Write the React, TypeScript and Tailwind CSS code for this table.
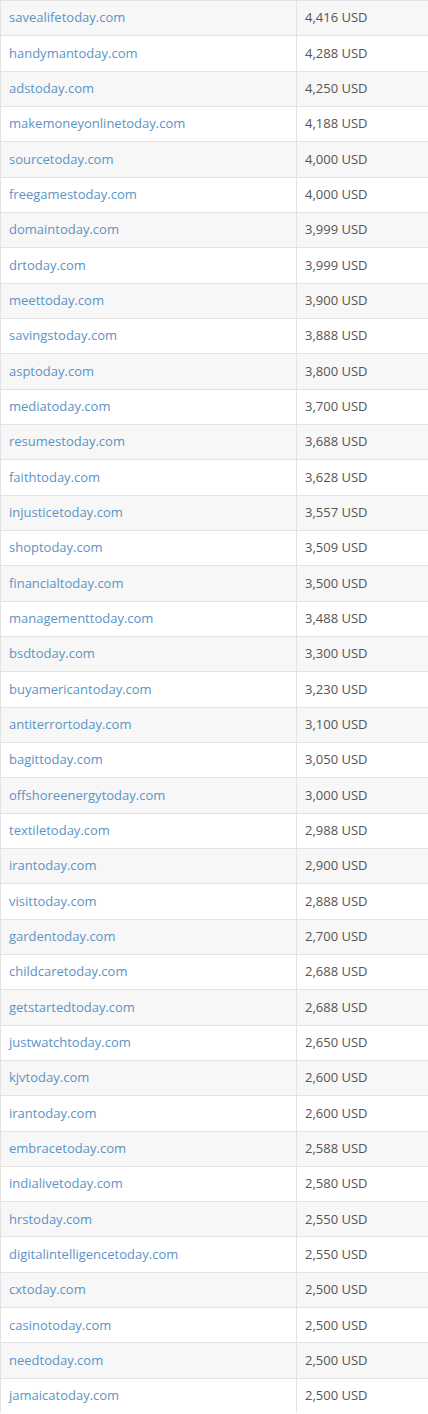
import React from 'react';

const domains: [string, string][] = [
  ['savealifetoday.com', '4,416 USD'],
  ['handymantoday.com', '4,288 USD'],
  ['adstoday.com', '4,250 USD'],
  ['makemoneyonlinetoday.com', '4,188 USD'],
  ['sourcetoday.com', '4,000 USD'],
  ['freegamestoday.com', '4,000 USD'],
  ['domaintoday.com', '3,999 USD'],
  ['drtoday.com', '3,999 USD'],
  ['meettoday.com', '3,900 USD'],
  ['savingstoday.com', '3,888 USD'],
  ['asptoday.com', '3,800 USD'],
  ['mediatoday.com', '3,700 USD'],
  ['resumestoday.com', '3,688 USD'],
  ['faithtoday.com', '3,628 USD'],
  ['injusticetoday.com', '3,557 USD'],
  ['shoptoday.com', '3,509 USD'],
  ['financialtoday.com', '3,500 USD'],
  ['managementtoday.com', '3,488 USD'],
  ['bsdtoday.com', '3,300 USD'],
  ['buyamericantoday.com', '3,230 USD'],
  ['antiterrortoday.com', '3,100 USD'],
  ['bagittoday.com', '3,050 USD'],
  ['offshoreenergytoday.com', '3,000 USD'],
  ['textiletoday.com', '2,988 USD'],
  ['irantoday.com', '2,900 USD'],
  ['visittoday.com', '2,888 USD'],
  ['gardentoday.com', '2,700 USD'],
  ['childcaretoday.com', '2,688 USD'],
  ['getstartedtoday.com', '2,688 USD'],
  ['justwatchtoday.com', '2,650 USD'],
  ['kjvtoday.com', '2,600 USD'],
  ['irantoday.com', '2,600 USD'],
  ['embracetoday.com', '2,588 USD'],
  ['indialivetoday.com', '2,580 USD'],
  ['hrstoday.com', '2,550 USD'],
  ['digitalintelligencetoday.com', '2,550 USD'],
  ['cxtoday.com', '2,500 USD'],
  ['casinotoday.com', '2,500 USD'],
  ['needtoday.com', '2,500 USD'],
  ['jamaicatoday.com', '2,500 USD'],
];

export default function App() {
  return (
    <div className="w-[428px] h-[1414px] overflow-hidden bg-white font-['Open_Sans',sans-serif] text-[13px]">
      <div className="border-l border-[#e3e3e3]">
        {domains.map(([name, price], i) => (
          <div
            key={i}
            className={`flex h-[35.34px] border-t border-[#e3e3e3] ${i % 2 === 0 ? 'bg-[#f7f7f7]' : 'bg-white'}`}
          >
            <div className="w-[296px] shrink-0 flex items-center pl-2 border-r border-[#e3e3e3]">
              <a href="#" className="text-[#5b94c6]">{name}</a>
            </div>
            <div className="flex-1 flex items-center pl-2 text-[#555555]">{price}</div>
          </div>
        ))}
      </div>
    </div>
  );
}
